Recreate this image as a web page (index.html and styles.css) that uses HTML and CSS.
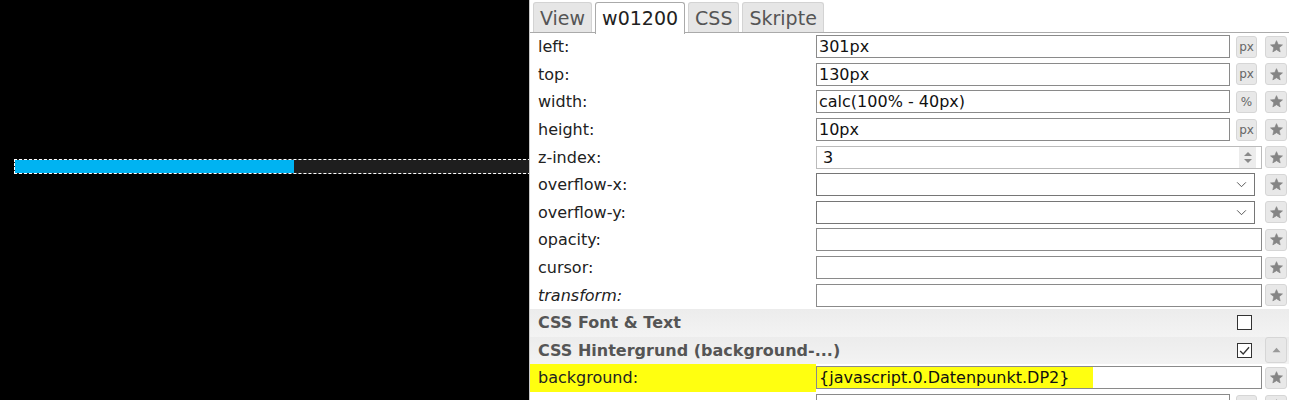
FILE: index.html
```html
<!DOCTYPE html>
<html lang="de">
<head>
    <meta charset="UTF-8">
    <title>vis Editor - w01200</title>
    <link rel="stylesheet" href="styles.css">
</head>
<body>

    <div class="page">
        <div class="stage">
            <div class="bar"><div class="bar-fill" style="width: 279px"></div></div>
        </div>

        <div class="panel">
            <div class="tabs">
                <span class="tab">View</span>
                <span class="tab active">w01200</span>
                <span class="tab">CSS</span>
                <span class="tab">Skripte</span>
            </div>

            <div class="rows">
                <div class="row">
                    <span class="label">left:</span>
                    <input class="field" type="text" value="301px">
                    <button class="unit">px</button>
                    <button class="star"><svg viewBox="0 0 12 12"><path d="M6 0.6 7.6 4.2 11.5 4.5 8.5 7.1 9.4 11 6 8.9 2.6 11 3.5 7.1 0.5 4.5 4.4 4.2Z"/></svg></button>
                </div>
                <div class="row">
                    <span class="label">top:</span>
                    <input class="field" type="text" value="130px">
                    <button class="unit">px</button>
                    <button class="star"><svg viewBox="0 0 12 12"><path d="M6 0.6 7.6 4.2 11.5 4.5 8.5 7.1 9.4 11 6 8.9 2.6 11 3.5 7.1 0.5 4.5 4.4 4.2Z"/></svg></button>
                </div>
                <div class="row">
                    <span class="label">width:</span>
                    <input class="field" type="text" value="calc(100% - 40px)">
                    <button class="unit">%</button>
                    <button class="star"><svg viewBox="0 0 12 12"><path d="M6 0.6 7.6 4.2 11.5 4.5 8.5 7.1 9.4 11 6 8.9 2.6 11 3.5 7.1 0.5 4.5 4.4 4.2Z"/></svg></button>
                </div>
                <div class="row">
                    <span class="label">height:</span>
                    <input class="field" type="text" value="10px">
                    <button class="unit">px</button>
                    <button class="star"><svg viewBox="0 0 12 12"><path d="M6 0.6 7.6 4.2 11.5 4.5 8.5 7.1 9.4 11 6 8.9 2.6 11 3.5 7.1 0.5 4.5 4.4 4.2Z"/></svg></button>
                </div>
                <div class="row">
                    <span class="label">z-index:</span>
                    <div class="field wide spin">
                        <span>3</span>
                        <span class="spinner"><i class="up"></i><i class="down"></i></span>
                    </div>
                    <button class="star"><svg viewBox="0 0 12 12"><path d="M6 0.6 7.6 4.2 11.5 4.5 8.5 7.1 9.4 11 6 8.9 2.6 11 3.5 7.1 0.5 4.5 4.4 4.2Z"/></svg></button>
                </div>
                <div class="row">
                    <span class="label">overflow-x:</span>
                    <div class="field select">
                        <svg class="chev" viewBox="0 0 12 8"><path d="M1 1.5 6 6.5 11 1.5"/></svg>
                    </div>
                    <button class="star"><svg viewBox="0 0 12 12"><path d="M6 0.6 7.6 4.2 11.5 4.5 8.5 7.1 9.4 11 6 8.9 2.6 11 3.5 7.1 0.5 4.5 4.4 4.2Z"/></svg></button>
                </div>
                <div class="row">
                    <span class="label">overflow-y:</span>
                    <div class="field select">
                        <svg class="chev" viewBox="0 0 12 8"><path d="M1 1.5 6 6.5 11 1.5"/></svg>
                    </div>
                    <button class="star"><svg viewBox="0 0 12 12"><path d="M6 0.6 7.6 4.2 11.5 4.5 8.5 7.1 9.4 11 6 8.9 2.6 11 3.5 7.1 0.5 4.5 4.4 4.2Z"/></svg></button>
                </div>
                <div class="row">
                    <span class="label">opacity:</span>
                    <input class="field wide" type="text" value="">
                    <button class="star"><svg viewBox="0 0 12 12"><path d="M6 0.6 7.6 4.2 11.5 4.5 8.5 7.1 9.4 11 6 8.9 2.6 11 3.5 7.1 0.5 4.5 4.4 4.2Z"/></svg></button>
                </div>
                <div class="row">
                    <span class="label">cursor:</span>
                    <input class="field wide" type="text" value="">
                    <button class="star"><svg viewBox="0 0 12 12"><path d="M6 0.6 7.6 4.2 11.5 4.5 8.5 7.1 9.4 11 6 8.9 2.6 11 3.5 7.1 0.5 4.5 4.4 4.2Z"/></svg></button>
                </div>
                <div class="row">
                    <span class="label italic">transform:</span>
                    <input class="field wide" type="text" value="">
                    <button class="star"><svg viewBox="0 0 12 12"><path d="M6 0.6 7.6 4.2 11.5 4.5 8.5 7.1 9.4 11 6 8.9 2.6 11 3.5 7.1 0.5 4.5 4.4 4.2Z"/></svg></button>
                </div>

                <div class="group">
                    <span class="group-title">CSS Font &amp; Text</span>
                    <span class="check"></span>
                    <span class="group-spacer"></span>
                </div>
                <div class="group">
                    <span class="group-title">CSS Hintergrund (background-...)</span>
                    <span class="check checked"><svg viewBox="0 0 12 12"><path d="M2 6.5 4.8 9.2 10.2 3"/></svg></span>
                    <button class="collapse"><svg viewBox="0 0 10 6"><path d="M5 0.5 9.5 5.5 0.5 5.5Z"/></svg></button>
                </div>

                <div class="row marked">
                    <span class="label">background:</span>
                    <input class="field wide" type="text" value="{javascript.0.Datenpunkt.DP2}">
                    <button class="star"><svg viewBox="0 0 12 12"><path d="M6 0.6 7.6 4.2 11.5 4.5 8.5 7.1 9.4 11 6 8.9 2.6 11 3.5 7.1 0.5 4.5 4.4 4.2Z"/></svg></button>
                </div>
                <div class="row">
                    <span class="label"></span>
                    <input class="field" type="text" value="">
                    <button class="unit"></button>
                    <button class="star"><svg viewBox="0 0 12 12"><path d="M6 0.6 7.6 4.2 11.5 4.5 8.5 7.1 9.4 11 6 8.9 2.6 11 3.5 7.1 0.5 4.5 4.4 4.2Z"/></svg></button>
                </div>
            </div>
        </div>
    </div>

</body>
</html>
```

FILE: styles.css
```css
body {
    margin: 0;
    background: #000;
    font-family: "DejaVu Sans", Verdana, sans-serif;
    overflow: hidden;
}

.page {
    display: flex;
    height: 400px;
}

.stage {
    width: 529px;
    flex-shrink: 0;
    padding-top: 159px;
    overflow: hidden;
}

.bar {
    margin-left: 14px;
    width: 540px;
    height: 13px;
    border: 1px dashed #fff;
    background: #1e1e1e;
}

.bar-fill {
    height: 100%;
    background: #00b3f2;
}

.panel {
    width: 760px;
    background: #fff;
    border-left: 1px solid #c8c8c8;
    overflow: hidden;
}

/* tabs */
.tabs {
    display: flex;
    gap: 3px;
    height: 33px;
    padding: 2px 0 0 3px;
    box-sizing: border-box;
    border-bottom: 1px solid #aaa;
}

.tab {
    padding: 0 6px;
    line-height: 30px;
    font-size: 19px;
    color: #555;
    background: #e6e6e6;
    border: 1px solid #d3d3d3;
    border-bottom: none;
    border-radius: 3px 3px 0 0;
}

.tab.active {
    background: #fff;
    color: #212121;
    border-color: #aaa;
    height: 31px;
}

/* property rows */
.row {
    display: flex;
    align-items: center;
    height: 27.6px;
}

.label {
    width: 278px;
    padding-left: 8px;
    flex-shrink: 0;
    align-self: stretch;
    display: flex;
    align-items: center;
    font-size: 16px;
    color: #222;
}

.italic {
    font-style: italic;
}

.field {
    flex: 1;
    min-width: 0;
    height: 23px;
    box-sizing: border-box;
    margin: 0;
    padding: 0 2px;
    border: 1px solid #8a8a8a;
    font-family: inherit;
    font-size: 16px;
    color: #111;
    background: #fff;
    outline: none;
}

.field.wide {
    margin-right: 3px;
}

.spin {
    display: flex;
    align-items: center;
    justify-content: space-between;
    border-color: #bbb;
    padding-left: 6px;
}

.spinner {
    display: flex;
    flex-direction: column;
    justify-content: center;
    gap: 3px;
    width: 17px;
    height: 21px;
    background: #ececec;
    margin-right: 3px;
}

.spinner i {
    display: block;
    margin: 0 auto;
    width: 0;
    height: 0;
    border-left: 4px solid transparent;
    border-right: 4px solid transparent;
}

.spinner .up {
    border-bottom: 4px solid #8a8a8a;
}

.spinner .down {
    border-top: 4px solid #8a8a8a;
}

.select {
    display: flex;
    align-items: center;
    justify-content: flex-end;
    margin-right: 10px;
    border-color: #767676;
}

.chev {
    width: 11px;
    height: 7px;
    margin-right: 5px;
    fill: none;
    stroke: #444;
    stroke-width: 1;
}

.unit,
.star,
.collapse {
    flex-shrink: 0;
    box-sizing: border-box;
    padding: 0;
    font-family: inherit;
    background: #e8e8e8;
    border: 1px solid #d6d6d6;
    border-radius: 3px;
    color: #666;
}

.unit {
    width: 21px;
    height: 22px;
    margin: 0 8px 0 6px;
    font-size: 12px;
}

.star {
    width: 22px;
    height: 22px;
    margin-right: 2px;
}

.star svg {
    display: block;
    width: 13px;
    height: 13px;
    margin: 0 auto;
    fill: #858585;
    stroke: #858585;
    stroke-width: 0.6;
    stroke-linejoin: round;
}

.marked .label {
    background: #ffff10;
}

.marked .field {
    background: linear-gradient(to right, #ffff10 0, #ffff10 276px, #fff 276px);
}

/* groups */
.group {
    display: flex;
    align-items: center;
    height: 27.6px;
    background: linear-gradient(#ececec, #f3f3f3);
}

.group-title {
    flex: 1;
    padding-left: 8px;
    font-size: 16px;
    font-weight: bold;
    color: #555;
}

.check {
    width: 15px;
    height: 15px;
    box-sizing: border-box;
    border: 1px solid #333;
    background: #fff;
    margin-right: 13px;
}

.check svg {
    display: block;
    width: 13px;
    height: 13px;
    fill: none;
    stroke: #333;
    stroke-width: 1.2;
}

.group-spacer {
    width: 22px;
    margin-right: 2px;
}

.collapse {
    width: 22px;
    height: 26px;
    margin-right: 2px;
}

.collapse svg {
    display: block;
    width: 9px;
    height: 6px;
    margin: 0 auto;
    fill: #999;
}
```
